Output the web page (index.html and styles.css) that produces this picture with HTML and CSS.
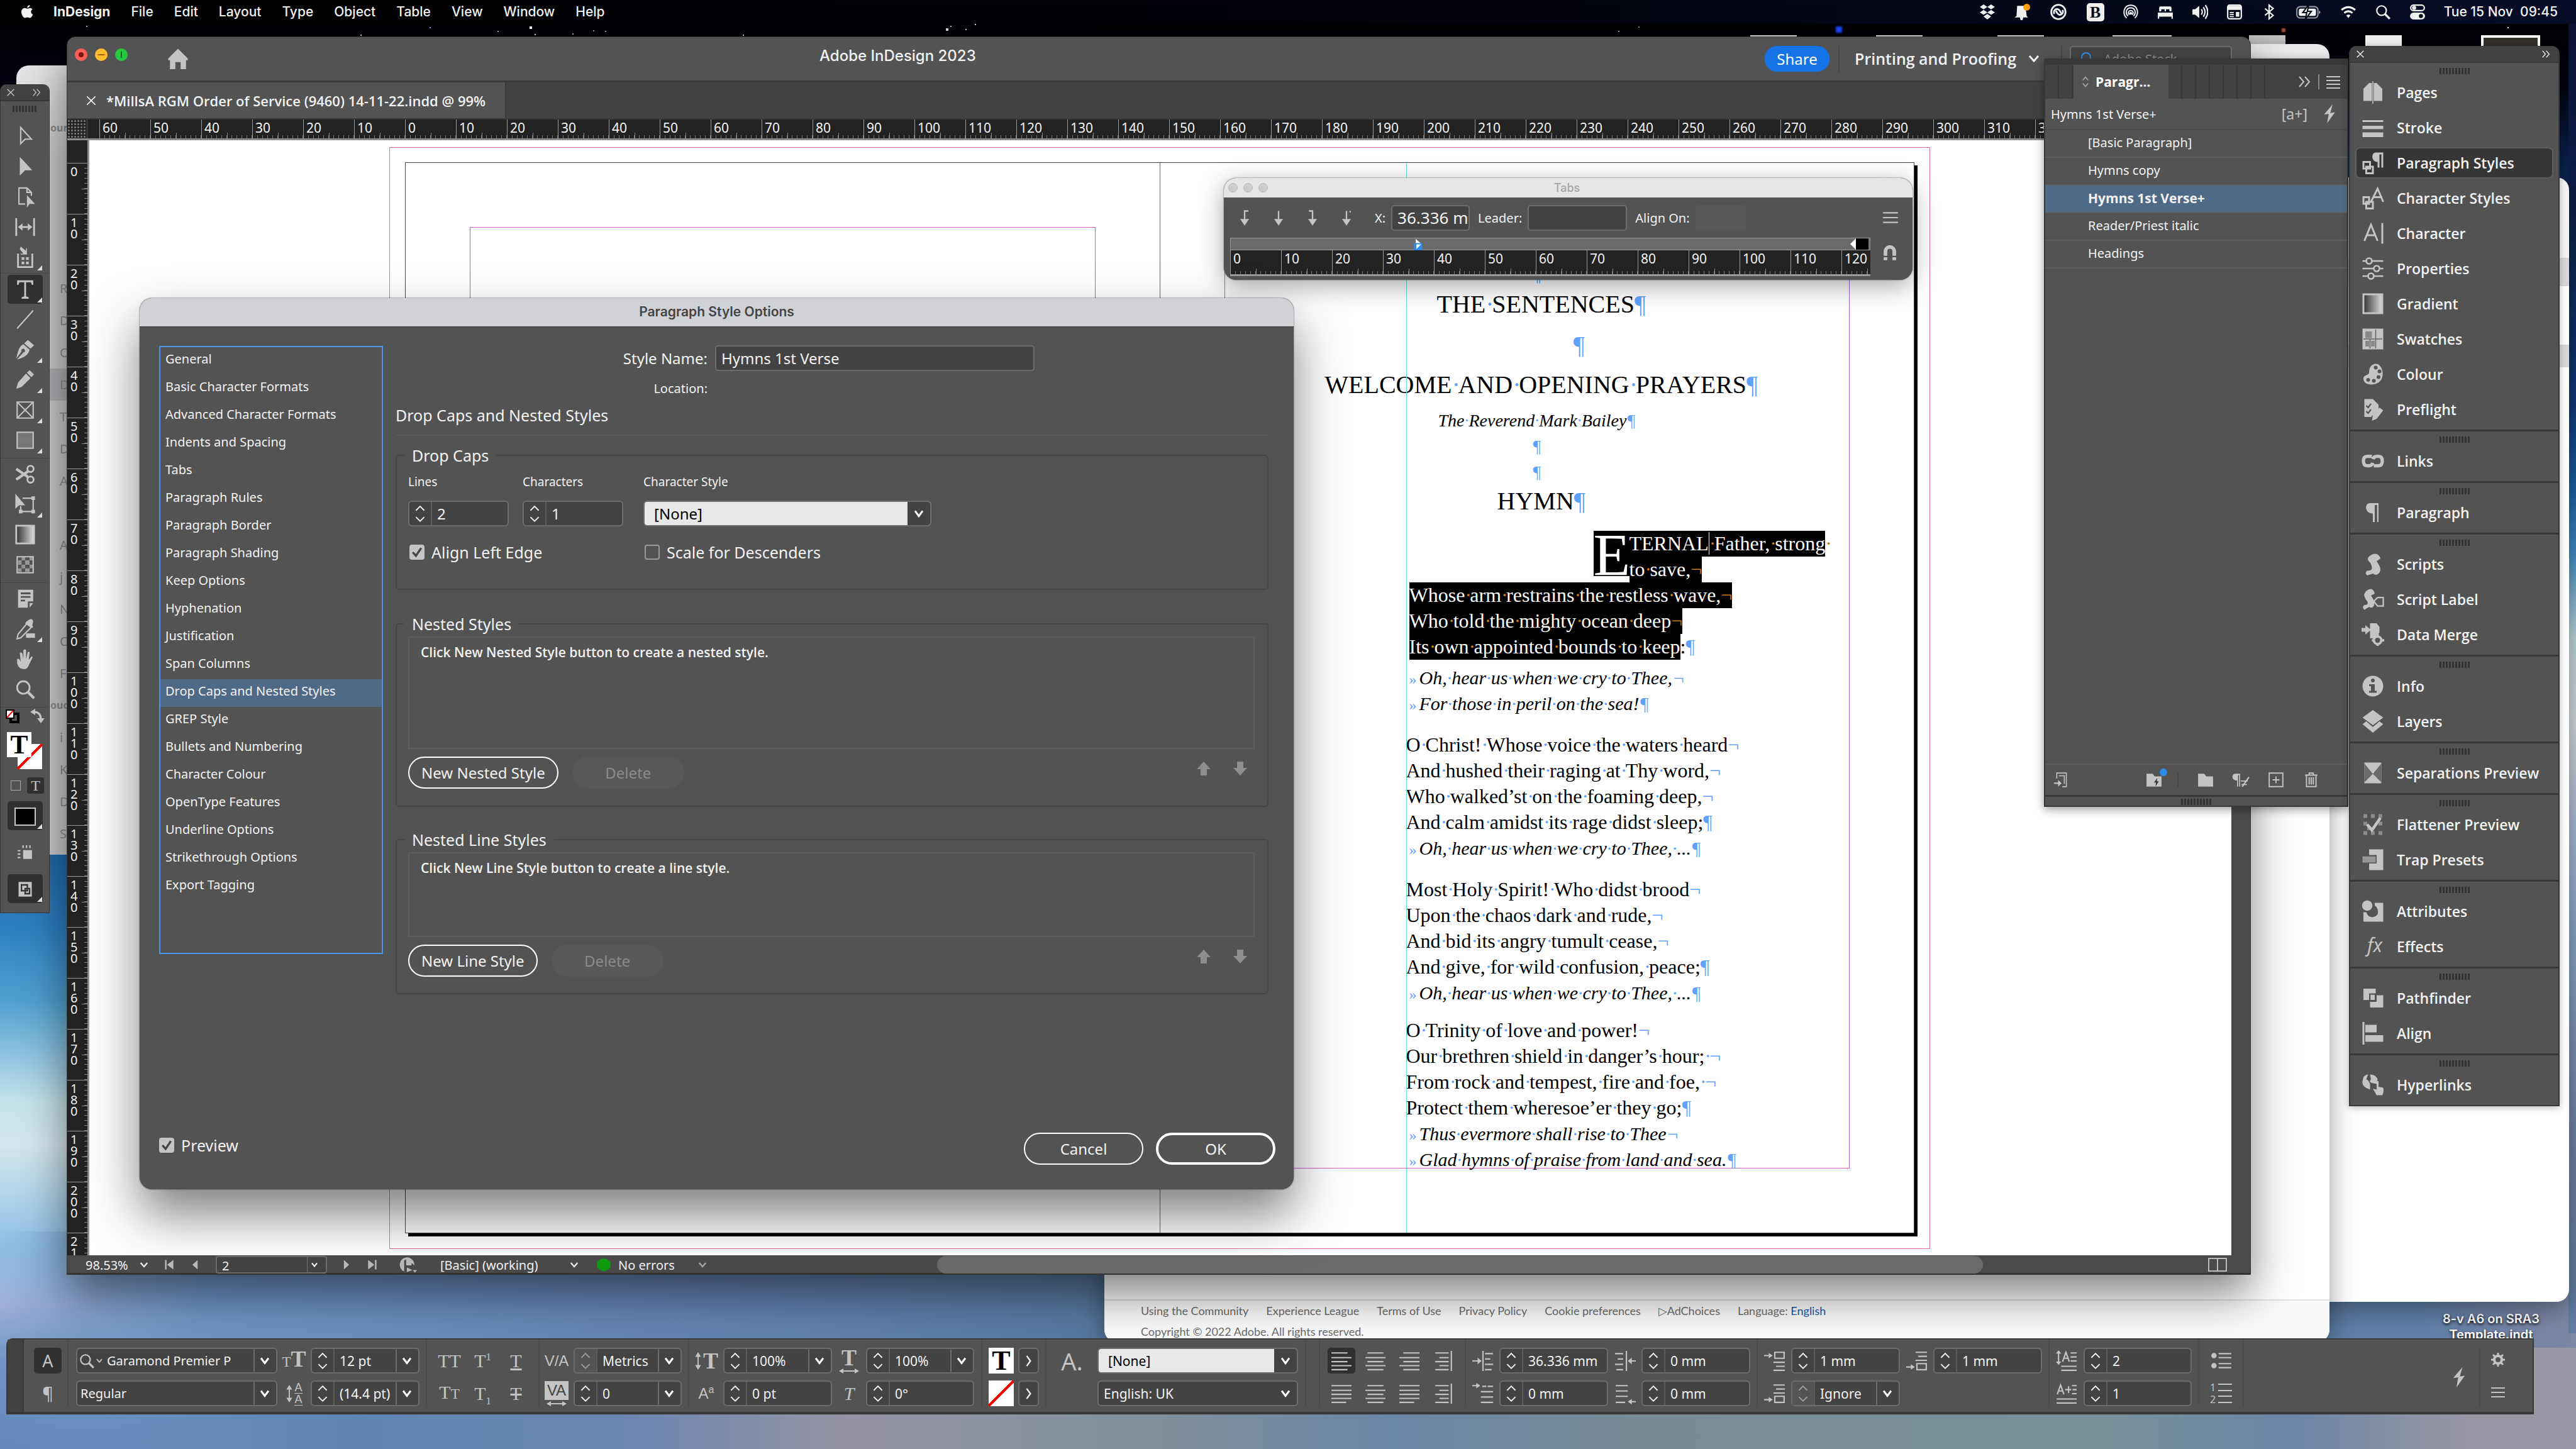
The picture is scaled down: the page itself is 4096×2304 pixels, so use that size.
FILE: index.html
```
<!DOCTYPE html>
<html lang="en">
<head>
    <meta charset="UTF-8">
    <title>Adobe InDesign 2023</title>
    <link rel="stylesheet" href="styles.css">
</head>
<body>
    <!-- Icon sprite -->
    <svg class="sprite" aria-hidden="true">
        <symbol id="apple" viewBox="0 0 24 24"><path d="M16.5 1c.2 2-1.700 4.500-4.200 4.500C12 3.500 14 1.200 16.500 1zM12.600 6.800c1 0 2.200-1.100 4.200-1.100 1.700 0 3 .8 3.900 2-3.500 2-3 6.800.6 8.200-.9 2.400-2.900 5.600-4.900 5.600-1.500 0-2-.9-3.800-.9s-2.400.9-3.800.9C6.300 21.500 3 16.500 3 12.200 3 8 5.700 5.800 8.200 5.800c1.800 0 3.100 1 4.400 1z"/></symbol>
        <symbol id="dropbox" viewBox="0 0 24 24"><path d="M6.500 1L12 4.600 6.500 8.200 1 4.600zM17.500 1L23 4.600l-5.500 3.600L12 4.600zM6.500 9L12 12.600l-5.500 3.600L1 12.600zM17.500 9L23 12.600l-5.500 3.600-5.500-3.600zM12 15l5.500 3.600L12 23l-5.500-4.400z"/></symbol>
        <symbol id="bell" viewBox="0 0 24 24"><path d="M5 3h12l2 15 2 2H1l3-2zM9 20h5l-1 4h-3z"/><circle cx="19" cy="5" r="5" fill="#ffa011"/></symbol>
        <symbol id="cc" viewBox="0 0 24 24"><circle cx="12" cy="12" r="10.500" fill="none" stroke="currentColor" stroke-width="2.500"/><path d="M6 15c-2-4 1-8 5-7 3 .6 4 5 6 7M18 9c2 4-1 8-5 7-3-.6-3-4-5-6" fill="none" stroke="currentColor" stroke-width="2.500"/></symbol>
        <symbol id="airdrop" viewBox="0 0 24 24"><g fill="none" stroke="currentColor" stroke-width="1.800"><path d="M6 21C-1 14 2 2 12 2s13 12 6 19"/><path d="M8 18C3 13 6 6 12 6s9 7 4 12"/><path d="M10 16c-3-3-1-6 2-6s5 3 2 6"/></g><circle cx="12" cy="14" r="2"/></symbol>
        <symbol id="bed" viewBox="0 0 24 24"><path d="M1 13h22v9h-2v-3H3v3H1zM3 11V6q0-2 2-2h14q2 0 2 2v5h-3V8h-5v3h-2V8H6v3z"/></symbol>
        <symbol id="volume" viewBox="0 0 24 24"><path d="M1 8h4l6-5v18l-6-5H1z"/><path d="M14 8q3 4 0 8M17 5q5 7 0 14M20 2q7 10 0 20" fill="none" stroke="currentColor" stroke-width="2"/></symbol>
        <symbol id="keys" viewBox="0 0 24 24"><rect x="2" y="2" width="20" height="20" rx="3" fill="none" stroke="currentColor" stroke-width="2"/><path d="M2 3h20v6H2zM5 12h6v1.500H5zM5 15h6v1.500H5zM5 18h6v1.500H5zM14 12h5v7h-5z"/></symbol>
        <symbol id="bluetooth" viewBox="0 0 24 24"><path d="M6 7l12 10-6 5V2l6 5L6 17" fill="none" stroke="currentColor" stroke-width="2"/></symbol>
        <symbol id="battery" viewBox="0 0 40 24"><rect x="2" y="4" width="32" height="17" rx="5" fill="none" stroke="currentColor" stroke-width="2" opacity=".6"/><rect x="5" y="7" width="26" height="11" rx="3"/><path d="M36 10q3 2 0 5z"/><path d="M20 1l-9 12h6l-2 10 9-12h-6z" stroke="#040817" stroke-width="2"/></symbol>
        <symbol id="wifi" viewBox="0 0 24 24"><g fill="none" stroke="currentColor" stroke-width="3"><path d="M2 9q10-8 20 0"/><path d="M6 13.500q6-5 12 0"/></g><path d="M9 17q3-2 6 0l-3 4z"/></symbol>
        <symbol id="search" viewBox="0 0 24 24"><circle cx="10" cy="10" r="7" fill="none" stroke="currentColor" stroke-width="2"/><path d="M15 15l7 7" stroke="currentColor" stroke-width="3"/></symbol>
        <symbol id="toggles" viewBox="0 0 24 24"><rect x="2" y="2" width="20" height="8" rx="4" fill="none" stroke="currentColor" stroke-width="2"/><circle cx="7" cy="6" r="3"/><rect x="1" y="13" width="22" height="10" rx="5"/><circle cx="17" cy="18" r="3" fill="#040817"/></symbol>

        <symbol id="home" viewBox="0 0 24 24"><path d="M12 1l11 11v2h-2v10h-6v-8H9v8H3V14H1v-2z"/></symbol>
        <symbol id="chev" viewBox="0 0 24 24"><path d="M5 8l7 8 7-8" fill="none" stroke="currentColor" stroke-width="3"/></symbol>
        <symbol id="next" viewBox="0 0 24 24"><path d="M9 5l5 7-5 7" fill="none" stroke="currentColor" stroke-width="2"/></symbol>
        <symbol id="more" viewBox="0 0 24 24"><path d="M4 4l7 8-7 8M13 4l7 8-7 8" fill="none" stroke="currentColor" stroke-width="2"/></symbol>
        <symbol id="close" viewBox="0 0 24 24"><path d="M4 4l16 16M20 4L4 20" stroke="currentColor" stroke-width="2"/></symbol>
        <symbol id="burger" viewBox="0 0 24 24"><path d="M1 4h22v2H1zM1 11h22v2H1zM1 18h22v2H1z"/></symbol>
        <symbol id="burger4" viewBox="0 0 24 24"><path d="M1 3h22v2H1zM1 9h22v2H1zM1 15h22v2H1zM1 21h22v2H1z"/></symbol>
        <symbol id="step" viewBox="0 0 36 38"><path d="M11 14l7-7 7 7M11 25l7 7 7-7" fill="none" stroke="currentColor" stroke-width="2"/></symbol>
        <symbol id="bolt" viewBox="0 0 24 24"><path d="M16 0L5 13l6-1-2 12 10-14-6 1z"/></symbol>
        <symbol id="updown" viewBox="0 0 24 24"><path d="M7 9l5-6 5 6M7 15l5 6 5-6" fill="none" stroke="currentColor" stroke-width="2"/></symbol>

        <!-- tools -->
        <symbol id="t-select" viewBox="0 0 24 24"><path d="M7 2v18l5-5h7z" fill="none" stroke="currentColor" stroke-width="1.500"/></symbol>
        <symbol id="t-direct" viewBox="0 0 24 24"><path d="M6 1v21l6-6h8z"/></symbol>
        <symbol id="t-page" viewBox="0 0 24 24"><path d="M12 20H5V2h9l5 5v4M14 2v5h5" fill="none" stroke="currentColor" stroke-width="1.500"/><path d="M14 10v14l3-4h6z"/></symbol>
        <symbol id="t-gap" viewBox="0 0 24 24"><path d="M2 2v20M22 2v20" stroke="currentColor" stroke-width="2"/><path d="M4 12l5-4v3h6V8l5 4-5 4v-3H9v3z"/></symbol>
        <symbol id="t-collect" viewBox="0 0 24 24"><path d="M4 8v15h16V8" fill="none" stroke="currentColor" stroke-width="2"/><path d="M7 0l6 5V2h1v7H7V8h3L6 3zM8 12h3v3H8zM13 12h3v3h-3zM8 17h3v3H8zM13 17h3v3h-3z"/></symbol>
        <symbol id="t-type" viewBox="0 0 24 24"><path d="M3 2h18v5h-1.500l-1-3H13v16l3 1v1.500H8V21l3-1V4H5.500l-1 3H3z"/></symbol>
        <symbol id="t-line" viewBox="0 0 24 24"><path d="M3 22L21 2" stroke="currentColor" stroke-width="1.500"/></symbol>
        <symbol id="t-pen" viewBox="0 0 24 24"><path d="M15 1l7 6-4 4-7-6zM10 6l7 6c-1 6-7 9-14 11l7-8a2 2 0 1 0-2-1l-6 8C4 14 5 8 10 6z"/></symbol>
        <symbol id="t-pencil" viewBox="0 0 24 24"><path d="M17 1l5 5-3 3-5-5zM13 5l5 5L8 20l-6 2 2-7z"/></symbol>
        <symbol id="t-frame" viewBox="0 0 24 24"><path d="M3 3h18v18H3zM3 3l18 18M21 3L3 21" fill="none" stroke="currentColor" stroke-width="1.500"/></symbol>
        <symbol id="t-rect" viewBox="0 0 24 24"><path d="M3 3h18v18H3z" fill="#777" stroke="currentColor" stroke-width="1.500"/></symbol>
        <symbol id="t-scissors" viewBox="0 0 24 24"><g fill="none" stroke="currentColor"><circle cx="18" cy="6" r="3.500" stroke-width="2"/><circle cx="18" cy="18" r="3.500" stroke-width="2"/><path d="M2 6l13 9M2 18l13-9" stroke-width="3"/></g></symbol>
        <symbol id="t-free" viewBox="0 0 24 24"><path d="M9 5h12v15H7v-6" fill="none" stroke="currentColor" stroke-width="1.500"/><path d="M1 0v17l4-4h7zM19 3h4v4h-4zM19 18h4v4h-4zM5 18h4v4H5z"/></symbol>
        <symbol id="t-grad" viewBox="0 0 24 24"><defs><linearGradient id="lg"><stop stop-color="#333"/><stop offset="1" stop-color="#ddd"/></linearGradient></defs><path d="M2 2h20v20H2z" fill="url(#lg)" stroke="currentColor" stroke-width="2"/></symbol>
        <symbol id="t-feather" viewBox="0 0 24 24"><path d="M3 3h18v18H3z" fill="none" stroke="currentColor" stroke-width="1.500"/><path d="M8 3h4v4H8zM17 3h4v4h-4zM4 7h4v5H4zM12 7h5v5h-5zM8 12h4v4H8zM17 12h4v4h-4zM4 16h4v4H4zM12 16h5v4h-5z" opacity=".6"/></symbol>
        <symbol id="t-note" viewBox="0 0 24 24"><path d="M4 2h17v13h-6v7H4zM17 17h4l-4 5z"/><path d="M7 6h11M7 10h11M7 14h5" stroke="#535353" stroke-width="2"/></symbol>
        <symbol id="t-drop" viewBox="0 0 24 24"><path d="M14 6l5 4L7 22l-4 1 1-5z" fill="none" stroke="currentColor" stroke-width="1.500"/><path d="M16 2q4-3 5 2l-1 4 1 2-2 1-7-5 1-2z"/><path d="M13 17h10v5H13z"/></symbol>
        <symbol id="t-hand" viewBox="0 0 24 24"><path d="M3 12q2-1 3 1l1 2-1-10q2-1 3 1l1 6V2q2-2 3 0v10l2-8q2-1 2 1l-1 8 3-4q2 0 1 2l-5 10q-2 3-6 2-4 0-6-6z"/></symbol>
        <symbol id="t-swap" viewBox="0 0 24 24"><path d="M7 5q11 0 11 12" fill="none" stroke="currentColor" stroke-width="3"/><path d="M1 5l8-5v10zM12 15h12l-6 8z"/></symbol>
        <symbol id="t-default" viewBox="0 0 24 24"><path d="M9 8h12v13H9z" fill="none" stroke="#000" stroke-width="4"/><path d="M2 2h12v13H2z" fill="#fff" stroke="#000" stroke-width="2"/><path d="M3 14L13 3" stroke="red" stroke-width="2"/></symbol>
        <symbol id="t-view" viewBox="0 0 24 24"><path d="M9 8h13v13H9zM1 8h4v2H1zM1 13h4v2H1zM1 18h4v2H1zM8 1h2v4H8zM13 1h2v4h-2zM18 1h2v4h-2z"/></symbol>
        <symbol id="t-screen" viewBox="0 0 24 24"><path d="M3 2h18v20H3z"/><path d="M7 6h8v8H7zM12 11h6v7h-6z" fill="none" stroke="#333" stroke-width="2"/></symbol>

        <!-- dock -->
        <symbol id="d-pages" viewBox="0 0 24 24"><path d="M2 8l6-6h3v19H2zM13 2h3l6 6v13h-9z"/><path d="M12 0v24" stroke="currentColor"/></symbol>
        <symbol id="d-stroke" viewBox="0 0 24 24"><path d="M1 4h22v2H1zM1 10h22v3.500H1zM1 17h22v5H1z"/></symbol>
        <symbol id="d-pstyles" viewBox="0 0 24 24"><path d="M15 1h8v16h-2V3h-2v14h-2v-6c-7 0-7-10-2-10z"/><path d="M2 11h7v7H2zM5 16h7v7H5z" fill="none" stroke="currentColor" stroke-width="2"/></symbol>
        <symbol id="d-cstyles" viewBox="0 0 24 24"><path d="M10 16L17 2l6 14M13 11h9" fill="none" stroke="currentColor" stroke-width="2"/><path d="M2 11h6v7H2zM5 16h7v7H5z" fill="none" stroke="currentColor" stroke-width="2"/></symbol>
        <symbol id="d-char" viewBox="0 0 24 24"><path d="M3 20L10 3l7 17M6 14h9M22 1v22" fill="none" stroke="currentColor" stroke-width="2"/></symbol>
        <symbol id="d-props" viewBox="0 0 24 24"><g fill="none" stroke="currentColor" stroke-width="1.800"><path d="M1 4h4M11 4h12M1 12h12M19 12h4M1 20h6M13 20h10"/><circle cx="8" cy="4" r="3"/><circle cx="16" cy="12" r="3"/><circle cx="10" cy="20" r="3"/></g></symbol>
        <symbol id="d-swatch" viewBox="0 0 24 24"><path d="M1 1h22v22H1z"/><path d="M4 4h7v7H4zM4 14h4v6H4zM10 14h4v6h-4z" fill="#888"/><path d="M2 12h20M9 12v10M15 2v20" stroke="#666"/></symbol>
        <symbol id="d-colour" viewBox="0 0 24 24"><path d="M14 1c8-1 11 12 6 18-5 6-18 5-18-2 0-5 6-3 6-7 0-5 2-8 6-9z"/><g fill="#535353"><circle cx="15" cy="5" r="2"/><circle cx="19" cy="9" r="2"/><circle cx="18" cy="15" r="2"/><circle cx="13" cy="19" r="2"/><circle cx="7" cy="18" r="2"/></g></symbol>
        <symbol id="d-preflight" viewBox="0 0 24 24"><path d="M3 1h9l6 6v5l-8 8H3zM19 10l4 3-7 9-5 2 1-6z"/><path d="M5 8l2 2 3-4M5 14l2 2 3-4" fill="none" stroke="#535353" stroke-width="1.500"/></symbol>
        <symbol id="d-links" viewBox="0 0 24 24"><path d="M11 7H6q-4 0-4 5t4 5h2q3 0 4-3M13 17h5q4 0 4-5t-4-5h-2q-3 0-4 3" fill="none" stroke="currentColor" stroke-width="3.500"/></symbol>
        <symbol id="d-para" viewBox="0 0 24 24"><path d="M9 2h9v20h-1.500V4H14v18h-2v-9C3 13 3 2 9 2z"/></symbol>
        <symbol id="d-scripts" viewBox="0 0 24 24"><path d="M9 3q8-5 11 3l-4 3q6 8 3 12-3 4-7 1l-6 2q-3-3 0-5 5 0 5-3 0-4-4-8-1-3 2-5z"/></symbol>
        <symbol id="d-slabel" viewBox="0 0 24 24"><path d="M5 3q7-5 9 3l-4 2q5 7 3 11-2 3-5 1l-5 3q-3-3 0-5 5 0 3-4-4-5-3-8z"/><path d="M13 14l4-4h6v9h-6z" fill="none" stroke="currentColor" stroke-width="1.500"/></symbol>
        <symbol id="d-merge" viewBox="0 0 24 24"><path d="M9 0h7l3 4v6l-6 6H9zM0 5h4V2l6 5-6 5V9H0z"/><circle cx="17" cy="18" r="4" fill="none" stroke="currentColor" stroke-width="2.500" /><path d="M17 11v3M17 22v2M11 18h2M21 18h3" stroke="currentColor" stroke-width="2.500"/></symbol>
        <symbol id="d-info" viewBox="0 0 24 24"><circle cx="12" cy="12" r="11"/><path d="M8 10h6v7h2v2H8v-2h2v-5H8z" fill="#535353"/><circle cx="12" cy="6" r="2" fill="#535353"/></symbol>
        <symbol id="d-layers" viewBox="0 0 24 24"><path d="M12 0l11 8-11 8L1 8zM1 15l4-3 7 6 7-6 4 3-11 9z"/></symbol>
        <symbol id="d-sep" viewBox="0 0 24 24"><path d="M3 1h18v22H3z"/><path d="M3 2l9 11 9-11v20l-9-9-9 9z" fill="#6a6a6a"/></symbol>
        <symbol id="d-flat" viewBox="0 0 24 24"><path d="M2 1h4v4H2zM10 1h4v4h-4zM18 1h4v4h-4zM2 9h4v4H2zM18 9h4v4h-4zM6 14h4v4H6zM2 19h4v4H2zM10 19h4v4h-4zM18 19h4v4h-4z" opacity=".5"/><path d="M6 12l5 6 9-13" fill="none" stroke="currentColor" stroke-width="3"/></symbol>
        <symbol id="d-trap" viewBox="0 0 24 24"><path d="M8 1h15v22H8v-7h8V7H8z"/><path d="M1 8.500h14V15H1z" opacity=".6"/></symbol>
        <symbol id="d-attr" viewBox="0 0 24 24"><circle cx="6" cy="6" r="5.500"/><path d="M14 3h9v20H2V13h3q2 6 8 5 6-2 4-8-1-3-3-4z"/></symbol>
        <symbol id="d-path" viewBox="0 0 24 24"><path d="M2 2h13v5H8v7H2zM16 9h7v13H9v-6h7zM9.500 8.500H14V14H9.500z"/></symbol>
        <symbol id="d-align" viewBox="0 0 24 24"><path d="M1 0h2v24H1zM4 3h12v8H4zM4 14h19v7H4z"/></symbol>
        <symbol id="d-hyper" viewBox="0 0 24 24"><path d="M2 4q2-3 5-3L5 6q5 2 4 11Q0 14 1 8zM9 1q6 0 8 5l-1 5-5-1q-4-1-1-4z"/><path d="M16 8h2v6l5 1q1 4-1 8h-6l-4-7 4 1z"/></symbol>

        <!-- panel footer -->
        <symbol id="f-load" viewBox="0 0 24 24"><path d="M5 10V2h14v20h-6M8 6h8v12" fill="none" stroke="currentColor" stroke-width="1.500"/><path d="M1 16h6v-4l5 5-5 5v-4H1z"/></symbol>
        <symbol id="f-folder" viewBox="0 0 24 24"><path d="M1 3h9l3 4h10v15H1z"/></symbol>
        <symbol id="f-quick" viewBox="0 0 24 24"><path d="M1 3h9l3 4h10v15H1z"/><path d="M17 9l-5 7h3l-1 6 5-8h-3z" fill="#333"/></symbol>
        <symbol id="f-clear" viewBox="0 0 28 24"><path d="M6 3h7v19h-1.500V5H10v17H8.500v-9C0 13 0 3 6 3zM14 13h10v1.500H14zM15 18h8v1.500h-8z"/><path d="M16 22l10-14" stroke="currentColor" stroke-width="2"/></symbol>
        <symbol id="f-new" viewBox="0 0 24 24"><path d="M2 2h20v20H2zM12 7v10M7 12h10" fill="none" stroke="currentColor" stroke-width="1.800"/></symbol>
        <symbol id="f-trash" viewBox="0 0 24 24"><path d="M3 5h18M9 5V2h6v3M5 5v17h14V5M9 8v11M12 8v11M15 8v11" fill="none" stroke="currentColor" stroke-width="1.800"/></symbol>
        <symbol id="up" viewBox="0 0 24 24"><path d="M12 1l11 12h-6v10H7V13H1z"/></symbol>
        <symbol id="down" viewBox="0 0 24 24"><path d="M12 23l11-12h-6V1H7v10H1z"/></symbol>
        <symbol id="tab-l" viewBox="0 0 24 24"><path d="M11 14V2h6v2h-4v10h5l-6 9-6-9z"/></symbol>
        <symbol id="tab-c" viewBox="0 0 24 24"><path d="M11 14V3h2v11h5l-6 9-6-9z"/></symbol>
        <symbol id="tab-r" viewBox="0 0 24 24"><path d="M13 14V2H7v2h4v10H6l6 9 6-9z"/></symbol>
        <symbol id="tab-d" viewBox="0 0 24 24"><path d="M11 14V3h2v11h5l-6 9-6-9zM16 3h2v2h-2z"/></symbol>
        <symbol id="magnet" viewBox="0 0 24 24"><path d="M6 22V10a6 6 0 0 1 12 0v12" fill="none" stroke="currentColor" stroke-width="5"/><path d="M2 17h7M15 17h7" stroke="#535353" stroke-width="2"/></symbol>
        <symbol id="first" viewBox="0 0 24 24"><path d="M4 3h3v18H4zM20 3v18L8 12z"/></symbol>
        <symbol id="prev" viewBox="0 0 24 24"><path d="M17 3v18L7 12z"/></symbol>
        <symbol id="fwd" viewBox="0 0 24 24"><path d="M7 3v18l10-9z"/></symbol>
        <symbol id="last" viewBox="0 0 24 24"><path d="M17 3h3v18h-3zM4 3v18l12-9z"/></symbol>
        <symbol id="open" viewBox="0 0 28 24"><path d="M12 1a11 11 0 0 0-4 21V6l3-2v9h8V9l4 4A11 11 0 0 0 12 1zM21 20h6l-3 4z"/><path d="M12 16v7l8-3z"/></symbol>
        <symbol id="split" viewBox="0 0 30 24"><path d="M1 2h28v20H1zM15 2v20" fill="none" stroke="currentColor" stroke-width="2"/></symbol>

        <!-- control bar -->
        <symbol id="al" viewBox="0 0 32 32"><path d="M1 3h24v2H1zM1 10h30v2H1zM1 16h24v2H1zM1 22h30v2H1zM1 28h24v2H1z"/></symbol>
        <symbol id="ac" viewBox="0 0 32 32"><path d="M4 3h24v2H4zM1 10h30v2H1zM4 16h24v2H4zM1 22h30v2H1zM4 28h24v2H4z"/></symbol>
        <symbol id="ar" viewBox="0 0 32 32"><path d="M7 3h24v2H7zM1 10h30v2H1zM7 16h24v2H7zM1 22h30v2H1zM7 28h24v2H7z"/></symbol>
        <symbol id="as" viewBox="0 0 32 32"><path d="M4 3h20v2H4zM10 10h14v2H10zM4 16h20v2H4zM10 22h14v2H10zM4 28h20v2H4zM27 1h2v30h-2z"/></symbol>
        <symbol id="aj" viewBox="0 0 32 32"><path d="M1 3h30v2H1zM1 10h30v2H1zM1 16h30v2H1zM1 22h30v2H1zM1 28h22v2H1z"/></symbol>
        <symbol id="ind-l" viewBox="0 0 32 32"><path d="M15 1h2v30h-2zM19 4h12v2H19zM19 12h8v2h-8zM19 20h12v2H19zM19 28h10v2H19zM0 15h8v-4l6 5-6 5v-4H0z"/></symbol>
        <symbol id="ind-r" viewBox="0 0 32 32"><path d="M17 1h2v30h-2zM1 4h12v2H1zM5 12h8v2H5zM1 20h12v2H1zM3 28h10v2H3zM32 15h-6v-4l-6 5 6 5v-4h6z"/></symbol>
        <symbol id="ind-f" viewBox="0 0 32 32"><path d="M0 3h6V0l6 4-6 4V5H0zM15 4h6v2h-6zM23 4h8v2h-8zM13 12h18v2H13zM13 20h18v2H13zM13 28h18v2H13z"/></symbol>
        <symbol id="ind-e" viewBox="0 0 32 32"><path d="M2 3h18v2H2zM2 11h18v2H2zM2 19h18v2H2zM2 28h14v2H2zM32 27h-6v-3l-6 4 6 4v-3h6z"/></symbol>
        <symbol id="sp-b" viewBox="0 0 32 32"><path d="M16 3h14v9H16z" fill="none" stroke="currentColor" stroke-width="2"/><path d="M0 7h7V4l6 4-6 4V9H0zM14 17h17v2H14zM18 23h13v2H18zM14 29h17v2H14z"/></symbol>
        <symbol id="sp-a" viewBox="0 0 32 32"><path d="M16 20h14v9H16z" fill="none" stroke="currentColor" stroke-width="2"/><path d="M0 24h7v-3l6 4-6 4v-3H0zM14 2h17v2H14zM18 8h13v2H18zM14 14h17v2H14z"/></symbol>
        <symbol id="dc-l" viewBox="0 0 32 32"><path d="M10 17l5-14 5 14M12 12h7M4 3v16" fill="none" stroke="currentColor" stroke-width="2"/><path d="M22 3h9v2h-9zM22 9h9v2h-9zM22 15h9v2h-9zM8 23h23v2H8zM8 29h23v2H8zM0 5l4-5 4 5zM0 17h8l-4 5z"/></symbol>
        <symbol id="dc-c" viewBox="0 0 32 32"><path d="M2 17L7 3l5 14M4 12h7M14 10h9M19 5v10" fill="none" stroke="currentColor" stroke-width="2"/><path d="M24 3h7v2h-7zM25 9h6v2h-6zM24 15h7v2h-7zM1 23h30v2H1zM1 29h30v2H1z"/></symbol>
        <symbol id="bul" viewBox="0 0 32 32"><circle cx="5" cy="8" r="4"/><circle cx="5" cy="23" r="4"/><path d="M12 4h19v2H12zM12 10h19v2H12zM12 19h19v2H12zM12 25h19v2H12z"/></symbol>
        <symbol id="gear" viewBox="0 0 24 24"><circle cx="12" cy="12" r="6" fill="none" stroke="currentColor" stroke-width="4"/><path d="M12 1v5M12 18v5M1 12h5M18 12h5M4 4l4 4M16 16l4 4M20 4l-4 4M8 16l-4 4" stroke="currentColor" stroke-width="3"/></symbol>
        <symbol id="vsize" viewBox="0 0 12 32"><path d="M6 5v22" stroke="currentColor" stroke-width="2"/><path d="M1 9l5-8 5 8zM1 23h10l-5 8z"/></symbol>
        <symbol id="hsize" viewBox="0 0 32 8"><path d="M5 4h22" stroke="currentColor" stroke-width="2"/><path d="M7 0v8L0 4zM25 0v8l7-4z"/></symbol>
    </svg>

    <div class="desktop">
        <div class="stars"></div>
        <div class="file-thumbs"><i></i><i></i><i></i><i></i><i></i><i></i><i></i></div>
        <p class="desktop-label">8-v A6 on SRA3<br>Template.indt</p>

        <!-- Menu bar -->
        <header class="menubar">
            <nav class="menus">
                <svg class="apple"><use href="#apple"/></svg>
                <a href="#" class="app">InDesign</a>
                <a href="#">File</a><a href="#">Edit</a><a href="#">Layout</a><a href="#">Type</a><a href="#">Object</a><a href="#">Table</a><a href="#">View</a><a href="#">Window</a><a href="#">Help</a>
            </nav>
            <div class="extras">
                <svg><use href="#dropbox"/></svg><svg><use href="#bell"/></svg><svg class="cc"><use href="#cc"/></svg><span class="badge">B</span><svg><use href="#airdrop"/></svg><svg><use href="#bed"/></svg><svg><use href="#volume"/></svg><svg><use href="#keys"/></svg><svg><use href="#bluetooth"/></svg><svg class="battery"><use href="#battery"/></svg><svg><use href="#wifi"/></svg><svg><use href="#search"/></svg><svg><use href="#toggles"/></svg>
                <time>Tue 15 Nov&nbsp; 09:45</time>
            </div>
        </header>

        <!-- Finder window behind -->
        <div class="finder">
            <ul>
                <li class="head">our</li><li></li><li></li><li></li><li></li><li>R</li><li>D</li><li>O</li><li class="on">D</li><li>T</li><li>D</li><li>A</li><li></li><li>A</li><li>j</li><li>N</li><li>C</li><li>F</li><li class="head">oud</li><li>i</li><li>K</li><li>D</li><li>S</li><li>D</li>
            </ul>
        </div>

        <div class="plain-window"></div>

        <!-- Browser window behind -->
        <div class="browser">
            <footer>
                <div class="links">
                    <a href="#">Using the Community</a><a href="#">Experience League</a><a href="#">Terms of Use</a><a href="#">Privacy Policy</a><a href="#">Cookie preferences</a><a href="#">▷AdChoices</a><span>Language: <a href="#" class="lang">English</a></span>
                </div>
                <p>Copyright © 2022 Adobe. All rights reserved.</p>
            </footer>
        </div>

        <!-- InDesign document window -->
        <main class="window">
            <div class="titlebar">
                <div class="lights"><i class="red"></i><i class="yellow"></i><i class="green"></i></div>
                <svg class="home"><use href="#home"/></svg>
                <h1>Adobe InDesign 2023</h1>
                <button class="share">Share</button>
                <button class="workspace">Printing and Proofing <svg><use href="#chev"/></svg></button>
                <label class="stock"><svg><use href="#search"/></svg><input type="text" placeholder="Adobe Stock" aria-label="Adobe Stock"></label>
            </div>
            <div class="tabbar">
                <div class="tab"><svg><use href="#close"/></svg>*MillsA RGM Order of Service (9460) 14-11-22.indd @ 99%</div>
            </div>
            <div class="hruler"><span class="corner"></span><div class="ticks" id="hruler"></div></div>
            <div class="workarea">
                <div class="vruler" id="vruler"></div>
                <div class="pasteboard">
                    <div class="bleed"></div>
                    <div class="spread">
                        <section class="page"><div class="frame"></div></section>
                        <section class="page">
                            <div class="guide"></div>
                            <article class="frame doc">
                                <p class="centre"><b>¶</b></p>
                                <h2>THE SENTENCES<b>¶</b></h2>
                                <h2 class="blank"><b>¶</b></h2>
                                <h2 class="welcome">WELCOME AND OPENING PRAYERS<b>¶</b></h2>
                                <p class="centre reader">The Reverend Mark Bailey<b>¶</b></p>
                                <p class="centre"><b>¶</b></p>
                                <p class="centre"><b>¶</b></p>
                                <h2>HYMN<b>¶</b></h2>
                                <div class="opening">
                                    <span class="dropcap">E</span>
                                    <div>
                                        <p class="sel"><span class="caps">TERNAL</span> Father, strong </p>
                                        <p class="sel">to save,<b>¬</b></p>
                                    </div>
                                </div>
                                <div class="first">
                                    <p class="sel">Whose arm restrains the restless wave,<b>¬</b></p>
                                    <p class="sel">Who told the mighty ocean deep<b>¬</b></p>
                                    <p><span class="sel">Its own appointed bounds to keep</span>:<b>¶</b></p>
                                </div>
                                <div class="refrain"><p>Oh, hear us when we cry to Thee,<b>¬</b></p><p>For those in peril on the sea!<b>¶</b></p></div>
                                <div class="stanza">
                                    <p>O Christ! Whose voice the waters heard<b>¬</b></p>
                                    <p>And hushed their raging at Thy word,<b>¬</b></p>
                                    <p>Who walked’st on the foaming deep,<b>¬</b></p>
                                    <p>And calm amidst its rage didst sleep;<b>¶</b></p>
                                    <p class="it">Oh, hear us when we cry to Thee, ...<b>¶</b></p>
                                </div>
                                <div class="stanza">
                                    <p>Most Holy Spirit! Who didst brood<b>¬</b></p>
                                    <p>Upon the chaos dark and rude,<b>¬</b></p>
                                    <p>And bid its angry tumult cease,<b>¬</b></p>
                                    <p>And give, for wild confusion, peace;<b>¶</b></p>
                                    <p class="it">Oh, hear us when we cry to Thee, ...<b>¶</b></p>
                                </div>
                                <div class="stanza last">
                                    <p>O Trinity of love and power!<b>¬</b></p>
                                    <p>Our brethren shield in danger’s hour; <b>¬</b></p>
                                    <p>From rock and tempest, fire and foe, <b>¬</b></p>
                                    <p>Protect them wheresoe’er they go;<b>¶</b></p>
                                    <p class="it">Thus evermore shall rise to Thee<b>¬</b></p>
                                    <p class="it">Glad hymns of praise from land and sea.<b>¶</b></p>
                                </div>
                            </article>
                        </section>
                    </div>
                </div>
                <div class="vscroll"></div>
            </div>
            <div class="statusbar">
                <span class="zoom">98.53%</span><svg><use href="#chev"/></svg>
                <svg class="nav"><use href="#first"/></svg><svg class="nav"><use href="#prev"/></svg>
                <select aria-label="Page"><option>2</option></select>
                <svg class="nav"><use href="#fwd"/></svg><svg class="nav"><use href="#last"/></svg>
                <svg class="openin"><use href="#open"/></svg>
                <span class="profile">[Basic] (working)</span><svg><use href="#chev"/></svg>
                <span class="dot"></span><span class="errors">No errors</span><svg class="dim"><use href="#chev"/></svg>
                <div class="hscroll"><i></i></div>
                <svg class="split"><use href="#split"/></svg>
            </div>
        </main>

        <!-- Tabs panel -->
        <section class="tabs-panel">
            <header><i></i><i></i><i></i><h3>Tabs</h3></header>
            <div class="tabs-row">
                <svg><use href="#tab-l"/></svg><svg><use href="#tab-c"/></svg><svg><use href="#tab-r"/></svg><svg><use href="#tab-d"/></svg>
                <label for="tabx">X:</label><input id="tabx" class="tabx" type="text" value="36.336 m">
                <label for="leader">Leader:</label><input id="leader" class="leader" type="text">
                <label for="alignon">Align On:</label><input id="alignon" class="alignon" type="text" disabled>
                <svg class="menu"><use href="#burger"/></svg>
            </div>
            <div class="tabs-body">
                <div class="tabs-rule">
                    <div class="track">
                        <svg class="marker" viewBox="0 0 16 20"><path d="M4 1l9 8H4z" fill="#fff"/><path d="M1 8h14v12H1z" fill="#2d8ceb"/><path d="M5 10h8l-8 8z" fill="#fff"/></svg>
                        <svg class="endmark" viewBox="0 0 34 20"><path d="M12 0h22v20H12z" fill="#000"/><path d="M12 0v20L2 10z" fill="#fff"/></svg>
                    </div>
                    <div class="ticks" id="truler"></div>
                </div>
                <svg class="magnet"><use href="#magnet"/></svg>
            </div>
        </section>

        <!-- Tools panel -->
        <aside class="tools">
            <header><svg><use href="#close"/></svg><svg><use href="#more"/></svg></header>
            <div class="grip"></div>
            <div class="toolset">
                <button aria-label="Selection"><svg><use href="#t-select"/></svg></button>
                <button aria-label="Direct Selection"><svg><use href="#t-direct"/></svg></button>
                <button aria-label="Page"><svg><use href="#t-page"/></svg></button>
                <button aria-label="Gap"><svg><use href="#t-gap"/></svg></button>
                <button aria-label="Content Collector" class="fly"><svg><use href="#t-collect"/></svg></button>
            </div>
            <div class="toolset">
                <button aria-label="Type" class="fly on"><svg><use href="#t-type"/></svg></button>
                <button aria-label="Line"><svg><use href="#t-line"/></svg></button>
                <button aria-label="Pen" class="fly"><svg><use href="#t-pen"/></svg></button>
                <button aria-label="Pencil" class="fly"><svg><use href="#t-pencil"/></svg></button>
                <button aria-label="Frame" class="fly"><svg><use href="#t-frame"/></svg></button>
                <button aria-label="Rectangle" class="fly"><svg><use href="#t-rect"/></svg></button>
            </div>
            <div class="toolset">
                <button aria-label="Scissors"><svg><use href="#t-scissors"/></svg></button>
                <button aria-label="Free Transform" class="fly"><svg><use href="#t-free"/></svg></button>
                <button aria-label="Gradient"><svg><use href="#t-grad"/></svg></button>
                <button aria-label="Gradient Feather"><svg><use href="#t-feather"/></svg></button>
            </div>
            <div class="toolset">
                <button aria-label="Note"><svg><use href="#t-note"/></svg></button>
                <button aria-label="Eyedropper" class="fly"><svg><use href="#t-drop"/></svg></button>
                <button aria-label="Hand"><svg><use href="#t-hand"/></svg></button>
                <button aria-label="Zoom"><svg><use href="#search"/></svg></button>
            </div>
            <div class="swap"><svg><use href="#t-default"/></svg><svg><use href="#t-swap"/></svg></div>
            <div class="fillstroke"><span class="none"></span><span class="fill">T</span></div>
            <div class="format"><span class="box"></span><span class="ft">T</span></div>
            <button aria-label="Apply Colour" class="fly on apply"><i></i></button>
            <button aria-label="View Options" class="view"><svg><use href="#t-view"/></svg></button>
            <button aria-label="Screen Mode" class="fly on screen"><svg><use href="#t-screen"/></svg></button>
        </aside>

        <!-- Paragraph Style Options dialog -->
        <section class="dialog" role="dialog" aria-labelledby="dlg-title">
            <h2 id="dlg-title">Paragraph Style Options</h2>
            <div class="dialog-body">
                <ul class="sections">
                    <li>General</li><li>Basic Character Formats</li><li>Advanced Character Formats</li><li>Indents and Spacing</li><li>Tabs</li><li>Paragraph Rules</li><li>Paragraph Border</li><li>Paragraph Shading</li><li>Keep Options</li><li>Hyphenation</li><li>Justification</li><li>Span Columns</li><li class="selected">Drop Caps and Nested Styles</li><li>GREP Style</li><li>Bullets and Numbering</li><li>Character Colour</li><li>OpenType Features</li><li>Underline Options</li><li>Strikethrough Options</li><li>Export Tagging</li>
                </ul>
                <div class="settings">
                    <div class="name-row"><label for="sname">Style Name:</label><input id="sname" type="text" value="Hymns 1st Verse"></div>
                    <div class="location">Location:</div>
                    <h3>Drop Caps and Nested Styles</h3>
                    <fieldset class="dropcaps">
                        <legend>Drop Caps</legend>
                        <div class="cols">
                            <div><label for="lines">Lines</label><span class="field"><svg class="step"><use href="#step"/></svg><input id="lines" type="text" value="2"></span></div>
                            <div><label for="chars">Characters</label><span class="field"><svg class="step"><use href="#step"/></svg><input id="chars" type="text" value="1"></span></div>
                            <div><label for="cstyle">Character Style</label><span class="field light"><select id="cstyle"><option>[None]</option></select></span></div>
                        </div>
                        <div class="checks">
                            <label><input type="checkbox" checked>Align Left Edge</label>
                            <label><input type="checkbox">Scale for Descenders</label>
                        </div>
                    </fieldset>
                    <fieldset class="nested">
                        <legend>Nested Styles</legend>
                        <div class="listbox">Click New Nested Style button to create a nested style.</div>
                        <div class="btnrow"><button class="pill">New Nested Style</button><button class="pill off" disabled>Delete</button><svg><use href="#up"/></svg><svg><use href="#down"/></svg></div>
                    </fieldset>
                    <fieldset class="nested-line">
                        <legend>Nested Line Styles</legend>
                        <div class="listbox">Click New Line Style button to create a line style.</div>
                        <div class="btnrow"><button class="pill">New Line Style</button><button class="pill off" disabled>Delete</button><svg><use href="#up"/></svg><svg><use href="#down"/></svg></div>
                    </fieldset>
                </div>
            </div>
            <div class="dialog-foot">
                <label><input type="checkbox" checked>Preview</label>
                <button class="pill">Cancel</button><button class="pill default">OK</button>
            </div>
        </section>

        <!-- Paragraph Styles panel -->
        <section class="styles-panel">
            <header>
                <span class="stubs"></span>
                <h3><svg><use href="#updown"/></svg>Paragr...</h3>
                <span class="stubs more"></span>
                <svg><use href="#more"/></svg><svg class="menu"><use href="#burger4"/></svg>
            </header>
            <div class="current">Hymns 1st Verse+<span>[a+]</span><svg><use href="#bolt"/></svg></div>
            <ul><li>[Basic Paragraph]</li><li>Hymns copy</li><li class="selected">Hymns 1st Verse+</li><li>Reader/Priest italic</li><li>Headings</li></ul>
            <footer>
                <svg class="load"><use href="#f-load"/></svg>
                <span class="cloud"><svg><use href="#f-quick"/></svg></span>
                <svg><use href="#f-folder"/></svg><svg class="clear"><use href="#f-clear"/></svg><svg><use href="#f-new"/></svg><svg><use href="#f-trash"/></svg>
            </footer>
            <div class="resize"><div class="grip"></div></div>
        </section>

        <!-- Collapsed panel dock -->
        <aside class="dock">
            <header><svg><use href="#close"/></svg><svg><use href="#more"/></svg></header>
            <div class="group"><div class="grip"></div>
                <button><svg><use href="#d-pages"/></svg>Pages</button>
                <button><svg><use href="#d-stroke"/></svg>Stroke</button>
                <button class="on"><svg><use href="#d-pstyles"/></svg>Paragraph Styles</button>
                <button><svg><use href="#d-cstyles"/></svg>Character Styles</button>
                <button><svg><use href="#d-char"/></svg>Character</button>
                <button><svg><use href="#d-props"/></svg>Properties</button>
                <button><svg><use href="#t-grad"/></svg>Gradient</button>
                <button><svg><use href="#d-swatch"/></svg>Swatches</button>
                <button><svg><use href="#d-colour"/></svg>Colour</button>
                <button><svg><use href="#d-preflight"/></svg>Preflight</button>
            </div>
            <div class="group"><div class="grip"></div><button><svg><use href="#d-links"/></svg>Links</button></div>
            <div class="group"><div class="grip"></div><button><svg><use href="#d-para"/></svg>Paragraph</button></div>
            <div class="group"><div class="grip"></div>
                <button><svg><use href="#d-scripts"/></svg>Scripts</button>
                <button><svg><use href="#d-slabel"/></svg>Script Label</button>
                <button><svg><use href="#d-merge"/></svg>Data Merge</button>
            </div>
            <div class="group"><div class="grip"></div>
                <button><svg><use href="#d-info"/></svg>Info</button>
                <button><svg><use href="#d-layers"/></svg>Layers</button>
            </div>
            <div class="group"><div class="grip"></div><button><svg><use href="#d-sep"/></svg>Separations Preview</button></div>
            <div class="group"><div class="grip"></div>
                <button><svg><use href="#d-flat"/></svg>Flattener Preview</button>
                <button><svg><use href="#d-trap"/></svg>Trap Presets</button>
            </div>
            <div class="group"><div class="grip"></div>
                <button><svg><use href="#d-attr"/></svg>Attributes</button>
                <button><em>fx</em>Effects</button>
            </div>
            <div class="group"><div class="grip"></div>
                <button><svg><use href="#d-path"/></svg>Pathfinder</button>
                <button><svg><use href="#d-align"/></svg>Align</button>
            </div>
            <div class="group"><div class="grip"></div><button><svg><use href="#d-hyper"/></svg>Hyperlinks</button></div>
        </aside>

        <!-- Control bar -->
        <section class="control">
            <div class="handle"></div>
            <div class="grp g-mode"><button class="on">A</button><button>¶</button></div>
            <div class="grp g-font">
                <span class="field font"><svg class="find"><use href="#search"/></svg><svg class="mini"><use href="#chev"/></svg><select aria-label="Font"><option>Garamond Premier P</option></select></span>
                <span class="gl"><small>T</small><strong>T</strong></span>
                <span class="field"><svg class="step"><use href="#step"/></svg><select aria-label="Font size"><option>12 pt</option></select></span>
                <span class="field font"><select aria-label="Font style"><option>Regular</option></select></span>
                <span class="gl pair"><svg class="vs"><use href="#vsize"/></svg><span class="stack"><i>A</i><i>A</i></span></span>
                <span class="field"><svg class="step"><use href="#step"/></svg><select aria-label="Leading"><option>(14.4 pt)</option></select></span>
            </div>
            <div class="grp g-case">
                <span class="gl">TT</span><span class="gl">T<sup>1</sup></span><span class="gl"><u>T</u></span>
                <span class="gl">T<small>T</small></span><span class="gl">T<sub>1</sub></span><span class="gl"><s>T</s></span>
            </div>
            <div class="grp g-kern">
                <span class="gl sans">V/A</span>
                <span class="field"><svg class="step off"><use href="#step"/></svg><select aria-label="Kerning"><option>Metrics</option></select></span>
                <span class="gl sans col"><mark>VA</mark><svg class="hs"><use href="#hsize"/></svg></span>
                <span class="field"><svg class="step"><use href="#step"/></svg><select aria-label="Tracking"><option>0</option></select></span>
            </div>
            <div class="grp g-scale">
                <span class="gl pair"><svg class="vs"><use href="#vsize"/></svg><strong>T</strong></span>
                <span class="field"><svg class="step"><use href="#step"/></svg><select aria-label="Vertical scale"><option>100%</option></select></span>
                <span class="gl col"><strong>T</strong><svg class="hs"><use href="#hsize"/></svg></span>
                <span class="field"><svg class="step"><use href="#step"/></svg><select aria-label="Horizontal scale"><option>100%</option></select></span>
                <span class="gl sans">A<sup>a</sup></span>
                <span class="field"><svg class="step"><use href="#step"/></svg><input aria-label="Baseline shift" type="text" value="0 pt"></span>
                <span class="gl"><em>T</em></span>
                <span class="field"><svg class="step"><use href="#step"/></svg><input aria-label="Skew" type="text" value="0°"></span>
            </div>
            <div class="grp g-fill">
                <span class="swatch">T</span><button class="go" aria-label="Fill"><svg><use href="#next"/></svg></button>
                <span class="swatch nofill"></span><button class="go" aria-label="Stroke"><svg><use href="#next"/></svg></button>
            </div>
            <div class="grp g-style">
                <span class="gl big">A.</span>
                <span class="field light"><select aria-label="Character style"><option>[None]</option></select></span>
                <span></span>
                <span class="field"><select class="flat" aria-label="Language"><option>English: UK</option></select></span>
            </div>
            <div class="grp g-gap"></div>
            <div class="grp g-align">
                <button class="on" aria-label="Left"><svg><use href="#al"/></svg></button><button aria-label="Centre"><svg><use href="#ac"/></svg></button><button aria-label="Right"><svg><use href="#ar"/></svg></button><button aria-label="Towards spine"><svg><use href="#as"/></svg></button>
                <button aria-label="Justify left"><svg><use href="#aj"/></svg></button><button aria-label="Justify centre"><svg><use href="#ac"/></svg></button><button aria-label="Justify all"><svg><use href="#aj"/></svg></button><button aria-label="Away from spine"><svg><use href="#as"/></svg></button>
            </div>
            <div class="grp g-indent">
                <svg class="ic"><use href="#ind-l"/></svg>
                <span class="field"><svg class="step"><use href="#step"/></svg><input aria-label="Left indent" type="text" value="36.336 mm"></span>
                <svg class="ic"><use href="#ind-r"/></svg>
                <span class="field"><svg class="step"><use href="#step"/></svg><input aria-label="Right indent" type="text" value="0 mm"></span>
                <svg class="ic"><use href="#ind-f"/></svg>
                <span class="field"><svg class="step"><use href="#step"/></svg><input aria-label="First line indent" type="text" value="0 mm"></span>
                <svg class="ic"><use href="#ind-e"/></svg>
                <span class="field"><svg class="step"><use href="#step"/></svg><input aria-label="Last line indent" type="text" value="0 mm"></span>
            </div>
            <div class="grp g-indent">
                <svg class="ic"><use href="#sp-b"/></svg>
                <span class="field"><svg class="step"><use href="#step"/></svg><input aria-label="Space before" type="text" value="1 mm"></span>
                <svg class="ic"><use href="#sp-a"/></svg>
                <span class="field"><svg class="step"><use href="#step"/></svg><input aria-label="Space after" type="text" value="1 mm"></span>
                <svg class="ic"><use href="#sp-a"/></svg>
                <span class="field"><svg class="step off"><use href="#step"/></svg><select aria-label="Space between"><option>Ignore</option></select></span>
            </div>
            <div class="grp g-kern">
                <svg class="ic"><use href="#dc-l"/></svg>
                <span class="field"><svg class="step"><use href="#step"/></svg><input aria-label="Drop cap lines" type="text" value="2"></span>
                <svg class="ic"><use href="#dc-c"/></svg>
                <span class="field"><svg class="step"><use href="#step"/></svg><input aria-label="Drop cap characters" type="text" value="1"></span>
            </div>
            <div class="grp g-list">
                <svg class="ic"><use href="#bul"/></svg>
                <span class="numbers"><i>1</i><i>2</i></span>
            </div>
            <div class="quick"><svg><use href="#bolt"/></svg></div>
            <div class="end"><svg><use href="#gear"/></svg><svg><use href="#burger"/></svg></div>
        </section>
    </div>

    <script src="script.js"></script>
</body>
</html>
```
FILE: styles.css
```
* {
    box-sizing: border-box;
}

body {
    margin: 0;
    font-family: "Noto Sans", "Open Sans", sans-serif;
    font-size: 20px;
    color: #f2f2f2;
}

h1, h2, h3, p, ul, fieldset, legend {
    margin: 0;
    padding: 0;
    font-weight: normal;
    list-style: none;
}

button, input, select {
    font: inherit;
    color: inherit;
    background: none;
    border: none;
    padding: 0;
    margin: 0;
    min-width: 0;
    appearance: none;
}

a {
    color: inherit;
    text-decoration: none;
}

svg {
    width: 24px;
    height: 24px;
    flex: none;
    fill: currentColor;
}

.sprite {
    position: absolute;
    width: 0;
    height: 0;
}

/* Desktop and wallpaper */
.desktop {
    position: relative;
    height: 100vh;
    overflow: hidden;
    background:
        linear-gradient(#0a1030 0%, #0c2048 14%, #0e3a78 28%, #1c62a6 34%, #3f8cc4 38%, #c0d8e0 44%, #d6dadd 50%, #a9bbd8 57%, #88a5c6 65%, #7183aa 78%, #5f7c9f 92%, transparent 92%) right / 12px 100% no-repeat,
        linear-gradient(90deg, transparent 2%, #5f84b4 14%, #6a86b0 24%, #9593a4 33%, #7f8f9c 45%, #6a87a6 54%, #788c97 64%, #76909c 82%, #6b86a6 89%, #9a97a4 96%) bottom / 100% 7% no-repeat,
        linear-gradient(90deg, transparent 0%, #6d94c4 8%, #6584b4 25%, #58799f 42%, #5f7fa6 94%, #7f87a4 100%) bottom / 100% 15% no-repeat,
        linear-gradient(#000 0%, #02030f 6%, #0a2450 12%, #123f7a 32%, #15559a 55%, #2c7fc0 64%, #4fa0d0 69%, #c4e2ec 76%, #d4e8ef 79%, #8fbfe4 86%, #9fb0d5 90%, #6f95c6 94%, #6386b8 100%);
}

.stars {
    position: absolute;
    top: 41px;
    left: 137px;
    width: 2px;
    height: 2px;
    background: #aaa;
    box-shadow: 546px 2px #99f, 706px 2px 0 1px #fff, 654px 8px #aaa, 436px 14px #ccc, 773px 12px #aaa, 806px 7px #999, 825px 8px #999, 713px 13px #ddd, 1044px 14px #bbb, 1368px 5px 0 1px #ddd, 1374px 0 #bbb, 1398px 5px #ccc, 1413px -3px #ccc, 2436px 8px #aaa, 2468px 1px #888, 2786px 5px 3px 4px #1c4bff, 2786px 5px 0 1px #fff, 3493px 6px 2px 2px #a4533d, 3850px 2px #ddd;
}

.file-thumbs i {
    position: absolute;
    top: 56px;
    left: 2783px;
    width: 74px;
    height: 16px;
    background: #eee;
}

.file-thumbs i:nth-child(2) { left: 2983px; }
.file-thumbs i:nth-child(3) { left: 3176px; }
.file-thumbs i:nth-child(4) { left: 3359px; width: 94px; }
.file-thumbs i:nth-child(5) { left: 3576px; width: 58px; background: #ccc; }
.file-thumbs i:nth-child(6) { left: 3761px; width: 58px; height: 30px; }
.file-thumbs i:nth-child(7) { left: 3945px; width: 94px; height: 30px; background: #33302c; border: 4px solid #fff; }

.desktop-label {
    position: absolute;
    right: 32px;
    bottom: 169px;
    width: 206px;
    text-align: center;
    font: 600 20px/25px Inter, sans-serif;
    color: #fff;
    text-shadow: 0 2px 4px #000;
}

/* Menu bar */
.menubar {
    display: flex;
    justify-content: space-between;
    align-items: center;
    height: 38px;
    padding: 0 29px 0 31px;
    font: 500 21px/38px Inter, sans-serif;
    background: linear-gradient(90deg, #000, #02030c 60%, #070d28);
}

.menus, .extras {
    display: flex;
    align-items: center;
    gap: 33px;
}

.extras {
    gap: 29px;
}

.extras svg {
    width: 26px;
    height: 26px;
}

.extras svg.battery {
    width: 42px;
}

.extras .cc {
    width: 32px;
}

.badge {
    width: 28px;
    height: 29px;
    border-radius: 5px;
    background: #f2f2f2;
    color: #040817;
    text-align: center;
    font: bold 26px/29px "Liberation Serif", serif;
}

.menus .apple {
    margin-right: -3px;
}

.menus .app {
    font-weight: 700;
}

/* Background windows */
.finder {
    position: absolute;
    left: 26px;
    top: 104px;
    width: 200px;
    height: 1255px;
    border-radius: 20px 0 0 0;
    background: linear-gradient(#e6e6e8, #c9c9cc 12%);
    color: #8a8a8e;
    overflow: hidden;
}

.finder ul {
    padding-top: 74px;
}

.finder li {
    height: 51px;
    line-height: 51px;
    padding-left: 69px;
}

.finder .head {
    padding-left: 54px;
    font-weight: bold;
    font-size: 16px;
}

.finder .on {
    background: #b0b0b4;
}

.plain-window {
    position: absolute;
    left: 3600px;
    right: 11px;
    top: 282px;
    bottom: 234px;
    border-radius: 20px;
    background: linear-gradient(#f4f4f4 0, #f4f4f4 128px, #d8d8d8 128px, #d8d8d8 173px, #fff 173px, #fff 266px, #d8d8d8 266px, #d8d8d8 302px, #fff 302px);
    box-shadow: 0 10px 40px rgba(0, 0, 0, 0.4);
}

.browser {
    position: absolute;
    left: 1756px;
    right: 392px;
    top: 70px;
    bottom: 170px;
    display: flex;
    flex-direction: column;
    justify-content: flex-end;
    border-radius: 20px;
    background: linear-gradient(#eaeaec 0, #eaeaec 60px, #fff 60px);
    box-shadow: 0 10px 40px rgba(0, 0, 0, 0.4);
}

.browser footer {
    height: 68px;
    padding-left: 58px;
    border-top: 2px solid #e2e2e2;
    border-radius: 0 0 20px 20px;
    background: #fafafa;
    color: #6b6b6b;
    font: 18px/33px Lato, sans-serif;
}

.browser .links {
    display: flex;
    gap: 28px;
}

.browser .lang {
    color: #1452b8;
}

/* Document window */
.window {
    position: absolute;
    inset: 58px 517px 277px 106px;
    display: flex;
    flex-direction: column;
    border: 1px solid #333;
    border-radius: 14px 14px 0 0;
    background: #535353;
    box-shadow: 0 30px 70px rgba(0, 0, 0, 0.5);
    overflow: hidden;
}

.titlebar {
    position: relative;
    display: flex;
    align-items: center;
    height: 72px;
    padding: 0 29px 14px 12px;
    border-bottom: 3px solid #3a3a3a;
}

.lights {
    display: flex;
    gap: 12px;
}

.lights i {
    width: 20px;
    height: 20px;
    border-radius: 50%;
    border: 6px solid #ff5f57;
    background: #7d1410;
}

.lights .yellow { border-color: #febc2e; background: #985712; border-width: 9px 4px; }
.lights .green { border-color: #28c840; background: #0b6519; border-width: 4px 9px; }

.home {
    width: 40px;
    height: 34px;
    margin: 12px 0 0 60px;
    color: #c4c4c4;
}

.titlebar h1 {
    flex: 1;
    margin: 4px 0 0 1000px;
    font: 500 24px/34px Inter, sans-serif;
}

.share {
    width: 103px;
    height: 41px;
    margin: 13px 14px 0 0;
    border-radius: 20px;
    background: #1473e6;
    color: #fff;
    font-size: 24px;
}

.workspace {
    display: flex;
    align-items: center;
    gap: 16px;
    height: 41px;
    margin: 13px 0 0;
    padding: 0 31px 0 24px;
    border-left: 2px solid #484848;
    border-right: 2px solid #484848;
    font: 600 25px "Open Sans", sans-serif;
}

.stock {
    display: flex;
    align-items: center;
    width: 258px;
    height: 41px;
    margin: 13px 0 0 12px;
    padding: 0 14px;
    gap: 14px;
    border: 2px solid #6c6c6c;
    border-radius: 5px;
    background: #434343;
    color: #2d8ceb;
}

.stock input {
    width: 180px;
}

.stock input::placeholder {
    color: #8a8a8a;
}

.tabbar {
    height: 59px;
    background: #424242;
    border-bottom: 2px solid #383838;
}

.tab {
    display: flex;
    align-items: center;
    gap: 14px;
    width: 698px;
    height: 57px;
    padding-left: 28px;
    background: #535353;
    border-right: 2px solid #383838;
    font: 600 22px "Open Sans", sans-serif;
    white-space: nowrap;
}

.tab svg {
    width: 20px;
    height: 20px;
}

/* Rulers, ten units to a segment */
.hruler {
    display: flex;
    height: 33px;
    background: #222;
    border-bottom: 3px solid #8e8e8e;
}

.corner {
    width: 32px;
    flex: none;
    background: radial-gradient(#777 1px, transparent 2px) 0 0 / 5px 5px;
    border-right: 1px solid #555;
}

.ticks {
    display: flex;
    overflow: hidden;
    font-size: 21px;
    line-height: 26px;
}

.hruler .ticks {
    padding-left: 19px;
}

.ticks span {
    flex: 0 0 81px;
    padding-left: 4px;
    border-left: 1px solid #999;
    background: repeating-linear-gradient(90deg, transparent 0 7px, #777 7px 8px) bottom / 100% 5px no-repeat,
        linear-gradient(90deg, transparent 40px, #888 40px 41px, transparent 41px) bottom / 100% 9px no-repeat;
}

.workarea {
    flex: 1;
    display: flex;
    min-height: 0;
}

.vruler {
    width: 35px;
    flex: none;
    padding-top: 36px;
    background: #222;
    border-right: 3px solid #8e8e8e;
    overflow: hidden;
}

.vruler span {
    display: block;
    width: 32px;
    height: 81px;
    padding: 4px 14px 0 5px;
    border-top: 1px solid #999;
    font-size: 20px;
    line-height: 18px;
    word-break: break-all;
    background: repeating-linear-gradient(transparent 0 7px, #777 7px 8px) right / 5px 100% no-repeat,
        linear-gradient(transparent 40px, #888 40px 41px, transparent 41px) right / 9px 100% no-repeat;
}

.pasteboard {
    position: relative;
    flex: 1;
    background: #fff;
    overflow: hidden;
}

.bleed {
    position: absolute;
    left: 477px;
    top: 11px;
    width: 2450px;
    height: 1752px;
    border: 1px solid #e0708c;
}

.spread {
    position: absolute;
    left: 502px;
    top: 35px;
    display: flex;
    width: 2400px;
    height: 1703px;
    border: 1px solid #444;
    background: #fff;
    box-shadow: 5px 5px 0 #000;
}

.page {
    position: relative;
    flex: 1;
    padding: 102px;
}

.page + .page {
    border-left: 1px solid #666;
}

.guide {
    position: absolute;
    left: 391px;
    top: 0;
    bottom: 0;
    width: 1px;
    background: #5fe0e0;
}

.frame {
    height: 100%;
    border: 1px solid;
    border-color: #d45bd0 #a860e0;
}

/* Order of service text */
.doc {
    color: #000;
    font: 32px/41px "Liberation Serif", "Times New Roman", serif;
    padding-top: 55px;
    white-space: nowrap;
}

.doc b {
    font-weight: normal;
    color: #5ea2fb;
}

.sp {
    position: relative;
}

.sp::after {
    content: "·";
    position: absolute;
    left: 0;
    color: #5ea2fb;
}

.doc h2 {
    font-size: 40px;
    line-height: 48px;
    text-align: center;
    margin-top: 5px;
    padding-left: 14px;
}

.doc h2.blank {
    margin-top: 17px;
    padding-left: 134px;
}

.doc h2.welcome {
    margin: 15px 0 12px;
}

.doc .centre {
    text-align: center;
    font-size: 28px;
}

.doc .centre + h2 {
    margin-top: 2px;
}

.doc .reader {
    font-style: italic;
}

.opening {
    display: flex;
    margin: 23px 0 0 586px;
}

.dropcap {
    width: 57px;
    height: 72px;
    background: #000;
    color: #fff;
    font-size: 96px;
    line-height: 78px;
    overflow: hidden;
}

.doc .sel {
    width: fit-content;
    background: #000;
    color: #fff;
}

.doc span.sel {
    display: inline-block;
}

.sel .sp::after, .sel b {
    color: #c87a1e;
}

.caps {
    border-right: 1px solid #fff;
}

.first {
    margin-left: 293px;
}

.refrain, .it {
    font-style: italic;
    font-size: 30px;
}

.refrain p, .it {
    height: 41px;
}

.refrain {
    margin: 8px 0 0 293px;
}

.refrain p::before, .it::before {
    content: "»";
    font-style: normal;
    font-size: 24px;
    line-height: 24px;
    color: #5ea2fb;
    margin-right: 4px;
}

.stanza {
    margin: 25px 0 0 288px;
}

.stanza .it {
    padding-left: 5px;
}

.stanza.last {
    margin-top: 19px;
}

.vscroll {
    width: 30px;
    background: #4a4a4a;
}

.statusbar {
    display: flex;
    align-items: center;
    height: 30px;
    background: #4a4a4a;
    border-bottom: 2px solid #333;
    padding: 2px 0 0 29px;
    font-size: 20px;
}

.statusbar svg {
    width: 18px;
    height: 18px;
}

.zoom {
    width: 84px;
}

.statusbar .nav {
    width: 20px;
    height: 20px;
    margin-left: 21px;
    color: #bbb;
}

.statusbar select {
    width: 177px;
    height: 28px;
    margin: 0 0 0 23px;
    padding-left: 8px;
    border: 2px solid #6c6c6c;
    border-radius: 4px;
    background-color: #434343;
}

.statusbar .openin {
    width: 30px;
    height: 26px;
    margin: 0 36px 0 32px;
    color: #bbb;
}

.profile {
    width: 204px;
}

.dot {
    width: 22px;
    height: 20px;
    margin: 0 12px 0 27px;
    border-radius: 50%;
    background: #0f9b0f;
}

.errors {
    width: 125px;
}

.dim {
    color: #aaa;
}

.hscroll {
    flex: 1;
    padding: 0 343px 0 364px;
}

.hscroll i {
    display: block;
    height: 28px;
    border-radius: 14px;
    background: #6a6a6a;
}

.statusbar .split {
    width: 36px;
    height: 24px;
    margin: 0 34px 0 12px;
    color: #bbb;
}

/* Fields */
.field {
    display: flex;
    height: 41px;
    border: 2px solid #6c6c6c;
    border-radius: 6px;
    background: #434343;
    overflow: hidden;
}

.field .step {
    width: 36px;
    height: 37px;
    border-right: 2px solid #5c5c5c;
}

.field .step.off {
    background: #535353;
    color: #999;
}

.field input, .field select {
    flex: 1;
    padding-left: 8px;
    font-size: 24px;
}

select {
    background: url("data:image/svg+xml,%3Csvg xmlns='http://www.w3.org/2000/svg' viewBox='0 0 36 36'%3E%3Cpath d='M1 0v36' stroke='%236c6c6c' stroke-width='2'/%3E%3Cpath d='M12 14l6 8 6-8' fill='none' stroke='white' stroke-width='3'/%3E%3C/svg%3E") right / 36px 100% no-repeat;
}

.field.light select {
    background-color: #e8e8e8;
    background-image: url("data:image/svg+xml,%3Csvg xmlns='http://www.w3.org/2000/svg' viewBox='0 0 36 36' preserveAspectRatio='none'%3E%3Cpath d='M0 0h36v36H0z' fill='%23434343'/%3E%3Cpath d='M12 14l6 8 6-8' fill='none' stroke='white' stroke-width='3'/%3E%3C/svg%3E");
    color: #000;
    padding-left: 15px;
}

.field select.flat {
    background-image: url("data:image/svg+xml,%3Csvg xmlns='http://www.w3.org/2000/svg' viewBox='0 0 36 36'%3E%3Cpath d='M12 14l6 8 6-8' fill='none' stroke='white' stroke-width='3'/%3E%3C/svg%3E");
}

input[type="checkbox"] {
    width: 24px;
    height: 24px;
    border: 2px solid #999;
    border-radius: 4px;
}

input[type="checkbox"]:checked {
    border-color: #c4c4c4;
    background: #c4c4c4 url("data:image/svg+xml,%3Csvg xmlns='http://www.w3.org/2000/svg' viewBox='0 0 24 24'%3E%3Cpath d='M4 12l6 7L20 4' fill='none' stroke='%23444' stroke-width='4'/%3E%3C/svg%3E") center / 20px no-repeat;
}

.grip {
    width: 48px;
    height: 10px;
    margin: 0 auto;
    background: repeating-linear-gradient(90deg, #333 0 3px, transparent 3px 5px);
}

/* Tabs panel */
.tabs-panel {
    position: absolute;
    left: 1946px;
    right: 1055px;
    top: 283px;
    height: 162px;
    border-radius: 20px;
    background: #535353;
    box-shadow: 0 10px 40px rgba(0, 0, 0, 0.35), 0 0 2px #444;
    overflow: hidden;
}

.tabs-panel header {
    position: relative;
    display: flex;
    align-items: center;
    gap: 9px;
    height: 31px;
    padding-left: 7px;
    background: #e6e6e6;
}

.tabs-panel header i {
    width: 15px;
    height: 15px;
    border-radius: 50%;
    background: #cdcdcd;
    border: 1px solid #b8b8b8;
}

.tabs-panel h3 {
    flex: 1;
    padding-right: 83px;
    text-align: center;
    font: 500 18px Inter, sans-serif;
    color: #a4a4a4;
}

.tabs-row {
    display: flex;
    align-items: center;
    height: 64px;
    padding: 0 22px 0 19px;
}

.tabs-row svg {
    width: 28px;
    height: 28px;
    margin-right: 26px;
    color: #c4c4c4;
}

.tabs-row label {
    margin-right: 9px;
}

.tabs-row svg + label {
    margin-left: 5px;
}

.tabs-row input {
    height: 41px;
    padding-left: 8px;
    border: 2px solid #6c6c6c;
    border-radius: 5px;
    background: #434343;
    font-size: 26px;
    margin-right: 13px;
}

.tabs-row .tabx { width: 125px; }
.tabs-row .leader { width: 158px; }
.tabs-row .alignon { width: 80px; background: #585858; border-color: #585858; }

.tabs-row .menu {
    width: 26px;
    margin: 0 0 0 auto;
}

.tabs-body {
    display: flex;
    justify-content: space-between;
    padding: 0 22px 0 10px;
}

.tabs-rule {
    width: 1018px;
    border-bottom: 3px solid #999;
    background: #222;
}

.track {
    position: relative;
    height: 20px;
    background: #6a6a6a;
    border: 1px solid #999;
}

.marker {
    position: absolute;
    left: 290px;
    top: 0;
    width: 16px;
    height: 19px;
}

.endmark {
    position: absolute;
    right: 1px;
    top: 0;
    width: 33px;
    height: 18px;
}

.tabs-rule .ticks {
    height: 38px;
}

.magnet {
    width: 28px;
    height: 28px;
    margin-top: 10px;
    color: #c4c4c4;
}

/* Tools */
.tools {
    position: absolute;
    left: 0;
    top: 134px;
    width: 79px;
    height: 1318px;
    border: 1px solid #383838;
    border-radius: 10px 10px 0 0;
    background: #535353;
    color: #c4c4c4;
    text-align: center;
}

.tools header, .dock header {
    display: flex;
    justify-content: space-between;
    align-items: center;
    height: 26px;
    padding: 0 10px 0 6px;
    background: #424242;
    border-bottom: 2px solid #383838;
    border-radius: 10px 10px 0 0;
}

.tools header svg, .dock header svg {
    width: 20px;
    height: 16px;
}

.tools > .grip {
    margin: 7px auto 16px;
    width: 40px;
}

.toolset {
    padding-bottom: 5px;
    border-bottom: 1px solid #484848;
    margin-bottom: 1px;
}

.tools > .grip + .toolset {
    padding-bottom: 2px;
}

.tools button {
    position: relative;
    display: block;
    width: 56px;
    height: 46px;
    margin: 2px auto 0;
}

.tools button svg {
    width: 34px;
    height: 34px;
    vertical-align: middle;
}

.tools .on {
    background: #303030;
    border-radius: 5px;
}

.tools .fly::after {
    content: "";
    position: absolute;
    right: 1px;
    bottom: 2px;
    border-bottom: 8px solid #ddd;
    border-left: 8px solid transparent;
}

.swap {
    display: flex;
    justify-content: space-around;
    height: 38px;
    padding-top: 1px;
}

.fillstroke {
    position: relative;
    height: 62px;
}

.fillstroke span {
    position: absolute;
    left: 10px;
    top: 0;
    width: 39px;
    height: 40px;
    background: #fff;
    color: #000;
    font: bold 42px/40px "Liberation Serif", serif;
}

.fillstroke .none {
    left: 27px;
    top: 19px;
    background: linear-gradient(135deg, #fff 46%, red 46% 54%, #fff 54%);
}

.format {
    display: flex;
    gap: 10px;
    align-items: center;
    justify-content: flex-end;
    padding: 0 8px;
    height: 46px;
    font: 24px/26px "Liberation Serif", serif;
}

.format .box {
    width: 16px;
    height: 16px;
    border: 1px solid #aaa;
}

.format .ft {
    width: 27px;
    height: 26px;
    background: #303030;
    border-radius: 4px;
}

.tools .apply i {
    display: inline-block;
    width: 34px;
    height: 29px;
    margin-top: 8px;
    border: 2px solid #c4c4c4;
    background: #000;
}

.tools .view {
    margin: 12px auto;
}

.tools .view svg {
    width: 26px;
    height: 26px;
}

.tools .screen svg {
    width: 28px;
    height: 28px;
}

/* Dialog */
.dialog {
    position: absolute;
    inset: 474px 2039px 413px 222px;
    display: flex;
    flex-direction: column;
    border-radius: 20px;
    background: #535353;
    box-shadow: 0 40px 80px rgba(0, 0, 0, 0.5), 0 0 2px #333;
    overflow: hidden;
}

.dialog > h2 {
    height: 46px;
    background: #d1d2d6;
    border-bottom: 1px solid #333;
    color: #444;
    text-align: center;
    font: 600 21px/44px Inter, sans-serif;
}

.dialog-body {
    flex: 1;
    display: flex;
    align-items: flex-start;
    padding: 30px 40px 0 31px;
    gap: 20px;
}

.sections {
    width: 356px;
    height: 967px;
    border: 2px solid #4a96e8;
}

.sections li {
    height: 44px;
    line-height: 38px;
    padding-left: 8px;
}

.sections .selected, .styles-panel .selected {
    background: #4f6a86;
}

.settings {
    flex: 1;
}

.name-row {
    display: flex;
    align-items: center;
    height: 39px;
    font-size: 24px;
}

.name-row label, .location {
    width: 496px;
    text-align: right;
}

.name-row input {
    width: 508px;
    height: 41px;
    margin-left: 12px;
    padding-left: 8px;
    border: 2px solid #6c6c6c;
    border-radius: 5px;
    background: #434343;
}

.location {
    line-height: 28px;
    margin-top: 15px;
}

.settings h3 {
    font-size: 25px;
    line-height: 32px;
    margin-top: 12px;
    padding-bottom: 15px;
    border-bottom: 2px solid #5a5a5a;
}

.settings fieldset {
    min-width: 0;
    margin: 0;
    padding: 0 20px 0 18px;
    border: 2px solid #474747;
    border-radius: 6px;
}

.settings legend {
    margin-left: -6px;
    padding: 0 12px;
    font-size: 25px;
    line-height: 32px;
}

.settings .dropcaps {
    height: 230px;
    margin-top: 15px;
}

.cols {
    display: flex;
    gap: 22px;
    padding-top: 12px;
}

.cols > div {
    width: 160px;
}

.cols > div:last-child {
    width: 458px;
    margin-left: 10px;
}

.cols label {
    display: block;
    line-height: 28px;
    margin-bottom: 16px;
    font-size: 19px;
}

.checks, .dialog-foot {
    display: flex;
    font-size: 25px;
}

.checks {
    padding: 25px 0 0 2px;
}

.checks label, .dialog-foot label {
    display: flex;
    align-items: center;
    gap: 11px;
    line-height: 32px;
}

.checks label:first-child {
    width: 374px;
}

.settings .nested {
    height: 307px;
    margin-top: 38px;
}

.settings .nested-line {
    height: 262px;
    margin-top: 36px;
}

.listbox {
    height: 179px;
    margin-top: 4px;
    padding: 8px 18px;
    border: 2px solid #5d5d5d;
    font: 600 21px/30px "Open Sans", sans-serif;
}

.nested-line .listbox {
    height: 135px;
}

.btnrow {
    display: flex;
    gap: 22px;
    margin-top: 12px;
}

.pill {
    height: 51px;
    padding: 0 19px;
    border: 2px solid #fff;
    border-radius: 26px;
    font-size: 24px;
}

.pill.off {
    width: 178px;
    border-color: #585858;
    background: #585858;
    color: #8a8a8a;
}

.btnrow svg {
    width: 26px;
    height: 24px;
    margin: 7px 10px 0 0;
    color: #8e8e8e;
}

.btnrow .off + svg {
    margin-left: auto;
}

.dialog-foot {
    align-items: center;
    gap: 20px;
    padding: 0 29px 39px 31px;
}

.dialog-foot label {
    margin-right: auto;
    padding-bottom: 12px;
}

.dialog-foot .pill {
    width: 190px;
}

.dialog-foot .default {
    border-width: 4px;
}

/* Paragraph Styles panel */
.styles-panel {
    position: absolute;
    inset: 93px 362px 1021px auto;
    width: 484px;
    display: flex;
    flex-direction: column;
    border: 2px solid #383838;
    background: #535353;
    box-shadow: 0 4px 14px rgba(0, 0, 0, 0.4);
}

.styles-panel header {
    display: flex;
    align-items: center;
    height: 62px;
    border-top: 8px solid #383838;
    background: #424242;
    color: #c4c4c4;
}

.styles-panel .stubs {
    align-self: stretch;
    width: 45px;
    background: repeating-linear-gradient(90deg, transparent 0 20px, #383838 20px 22px);
}

.styles-panel .stubs.more {
    flex: 1;
    margin-right: 40px;
}

.styles-panel h3 {
    align-self: stretch;
    display: flex;
    align-items: center;
    gap: 6px;
    width: 151px;
    padding-left: 9px;
    background: #535353;
    color: #fff;
    font: 700 21px "Open Sans", sans-serif;
}

.styles-panel h3 svg {
    width: 20px;
    height: 20px;
    color: #aaa;
}

.styles-panel .menu {
    padding-left: 10px;
    width: 36px;
    margin: 0 10px;
    border-left: 2px solid #888;
}

.current {
    display: flex;
    align-items: center;
    height: 50px;
    padding: 0 13px 0 9px;
    border-bottom: 2px solid #4b4b4b;
}

.current span {
    margin: 0 20px 0 auto;
    font-size: 23px;
    color: #c4c4c4;
}

.current svg {
    height: 30px;
    width: 30px;
    color: #c4c4c4;
}

.styles-panel ul {
    flex: 1;
}

.styles-panel li {
    height: 44px;
    line-height: 40px;
    padding-left: 68px;
    border-bottom: 2px solid #5e5e5e;
}

.styles-panel .selected {
    font: 700 21px/40px "Open Sans", sans-serif;
}

.styles-panel footer {
    display: flex;
    align-items: center;
    gap: 30px;
    height: 50px;
    padding-right: 44px;
    border-top: 2px solid #5e5e5e;
    color: #c4c4c4;
}

.styles-panel footer svg {
    width: 26px;
    height: 26px;
}

.styles-panel footer .clear {
    width: 32px;
    margin: 0 -3px;
}

.styles-panel footer .load {
    margin: 0 auto 0 13px;
}

.cloud {
    position: relative;
    display: flex;
    padding-right: 24px;
    border-right: 2px solid #484848;
    line-height: 46px;
}

.cloud::after {
    content: "";
    position: absolute;
    left: 22px;
    top: -5px;
    width: 12px;
    height: 12px;
    border-radius: 50%;
    background: #2d8ceb;
}

.resize {
    height: 17px;
    padding-top: 3px;
    border-top: 3px solid #383838;
}

/* Panel dock */
.dock {
    position: absolute;
    right: 26px;
    top: 73px;
    width: 335px;
    border: 2px solid #383838;
    border-top-width: 1px;
    border-radius: 12px 12px 0 0;
    background: #535353;
    box-shadow: 0 2px 12px rgba(0, 0, 0, 0.3);
}

.group {
    padding: 8px 10px 4px;
    border-bottom: 3px solid #383838;
}

.group:last-child {
    border-bottom: none;
}

.group .grip {
    margin-bottom: 6px;
}

.dock button {
    display: flex;
    align-items: center;
    gap: 20px;
    width: 100%;
    height: 46px;
    margin: 5px 0 10px;
    padding-left: 8px;
    border-radius: 6px;
    font: 600 23px "Open Sans", sans-serif;
}

.group button:last-child {
    margin-bottom: 5px;
}

.dock button.on {
    background: #363636;
    box-shadow: 0 0 0 2px #5e5e5e;
}

.dock button svg, .dock em {
    width: 36px;
    height: 36px;
    color: #c4c4c4;
}

.dock em {
    padding-left: 6px;
    font: italic 30px/32px "Noto Sans", sans-serif;
}

/* Control bar */
.control {
    position: absolute;
    left: 10px;
    right: 67px;
    bottom: 55px;
    display: flex;
    height: 121px;
    border: 2px solid #383838;
    border-bottom-width: 4px;
    border-radius: 10px 0 0 0;
    background: #535353;
}

.handle {
    width: 26px;
    background: #424242;
    border-right: 2px solid #383838;
}

.grp {
    display: grid;
    grid-auto-rows: 41px;
    row-gap: 11px;
    align-content: start;
    margin-bottom: 9px;
    padding-top: 13px;
    border-right: 2px solid #4c4c4c;
    color: #c4c4c4;
}

.grp .field {
    color: #f2f2f2;
}

.g-mode { grid-template-columns: 44px; padding-left: 16px; width: 71px; }
.g-font { grid-template-columns: 320px 53px 173px; padding: 13px 10px 0 12px; }
.g-case { grid-template-columns: 53px 53px 53px; padding: 13px 9px 0; }
.g-kern { grid-template-columns: 54px 172px; padding-right: 10px; }
.g-scale { grid-template-columns: 54px 173px 54px 172px; padding-right: 11px; }
.g-fill { grid-template-columns: 40px 33px; column-gap: 7px; padding: 13px 10px 0; }
.g-style { grid-template-columns: 81px 319px; padding-right: 11px; }
.g-gap { width: 22px; }
.g-align { grid-template-columns: 54px 54px 54px 54px; padding: 13px 7px 0; }
.g-indent { grid-template-columns: 53px 173px 53px 173px; padding-right: 10px; }
.g-list { grid-template-columns: 69px; }

.grp .on {
    background: #303030;
    border-radius: 5px;
}

.g-mode button {
    font-size: 27px;
}

.g-align button {
    margin: 0 5px;
}

.grp .ic, .g-align svg {
    width: 36px;
    height: 34px;
    place-self: center;
    vertical-align: middle;
}

.numbers {
    place-self: center;
    font-size: 16px;
}

.numbers i {
    display: flex;
    align-items: center;
    gap: 4px;
    height: 19px;
    font-style: normal;
}

.numbers i::after {
    content: "";
    width: 22px;
    height: 8px;
    border: solid;
    border-width: 2px 0;
}

.gl {
    place-self: center;
    font: 30px/36px "Liberation Serif", serif;
    white-space: nowrap;
}

.gl.pair {
    display: flex;
    align-items: center;
    gap: 2px;
}

.gl.col {
    display: flex;
    flex-direction: column;
    align-items: center;
    gap: 2px;
}

.gl.col mark, .gl.col strong {
    line-height: 30px;
}

.gl .vs {
    width: 12px;
    height: 30px;
}

.gl .hs {
    width: 32px;
    height: 8px;
}

.gl strong {
    font-size: 36px;
}

.gl small {
    font-size: 23px;
}

.gl sup, .gl sub {
    font-size: 16px;
    line-height: 10px;
}

.gl.sans {
    font: 24px/36px "Liberation Sans", sans-serif;
}

.gl.big {
    font: 38px/40px "Noto Sans", sans-serif;
}

.gl mark {
    padding: 0 4px;
    background: #c4c4c4;
    color: #434343;
}

.gl .stack i {
    display: block;
    font: 18px/18px "Liberation Sans", sans-serif;
    border-bottom: 1px solid;
}

.field.font .find {
    width: 26px;
    height: 26px;
    margin: 6px 0 0 2px;
    color: #c4c4c4;
}

.field .mini {
    width: 14px;
    height: 37px;
    color: #c4c4c4;
}

.control .field input, .control .field select {
    font-size: 21px;
}

.control .field.font select {
    padding-left: 5px;
    font-size: 20px;
}

.swatch {
    background: #fff;
    color: #000;
    text-align: center;
    font: bold 44px/41px "Liberation Serif", serif;
}

.swatch.nofill {
    background: linear-gradient(135deg, #fff 46%, red 46% 54%, #fff 54%);
}

.go {
    border: 2px solid #6c6c6c;
    border-radius: 6px;
    background: #434343;
    color: #f2f2f2;
}

.go svg {
    width: 28px;
    height: 30px;
    vertical-align: middle;
}

.quick {
    display: flex;
    align-items: center;
    margin: 13px 0 9px auto;
    padding-right: 16px;
    border-right: 2px solid #4c4c4c;
    color: #c4c4c4;
}

.quick svg {
    width: 32px;
    height: 36px;
}

.end {
    display: flex;
    flex-direction: column;
    gap: 28px;
    padding: 20px 43px 0 16px;
    color: #c4c4c4;
}
```
FILE: script.js
```
// Fill a ruler with one segment per ten units
function buildRuler(id, from, to) {
    const ruler = document.getElementById(id);
    for (let n = from; n <= to; n += 10) {
        const mark = document.createElement('span');
        mark.textContent = Math.abs(n);
        ruler.appendChild(mark);
    }
}

buildRuler('hruler', -60, 320);
buildRuler('vruler', 0, 210);
buildRuler('truler', 0, 120);

// Show hidden characters: wrap every space so it gets a dot
function markSpaces(node) {
    Array.from(node.childNodes).forEach(child => {
        if (child.nodeType === Node.ELEMENT_NODE) {
            markSpaces(child);
        } else if (child.textContent.trim() || /^ +$/.test(child.textContent)) {
            const parts = document.createDocumentFragment();
            child.textContent.split(/( )/).forEach(text => {
                if (text === ' ') {
                    const space = document.createElement('span');
                    space.className = 'sp';
                    space.textContent = ' ';
                    parts.appendChild(space);
                } else {
                    parts.appendChild(document.createTextNode(text));
                }
            });
            child.replaceWith(parts);
        }
    });
}

document.querySelectorAll('.doc p, .doc h2').forEach(markSpaces);
```
